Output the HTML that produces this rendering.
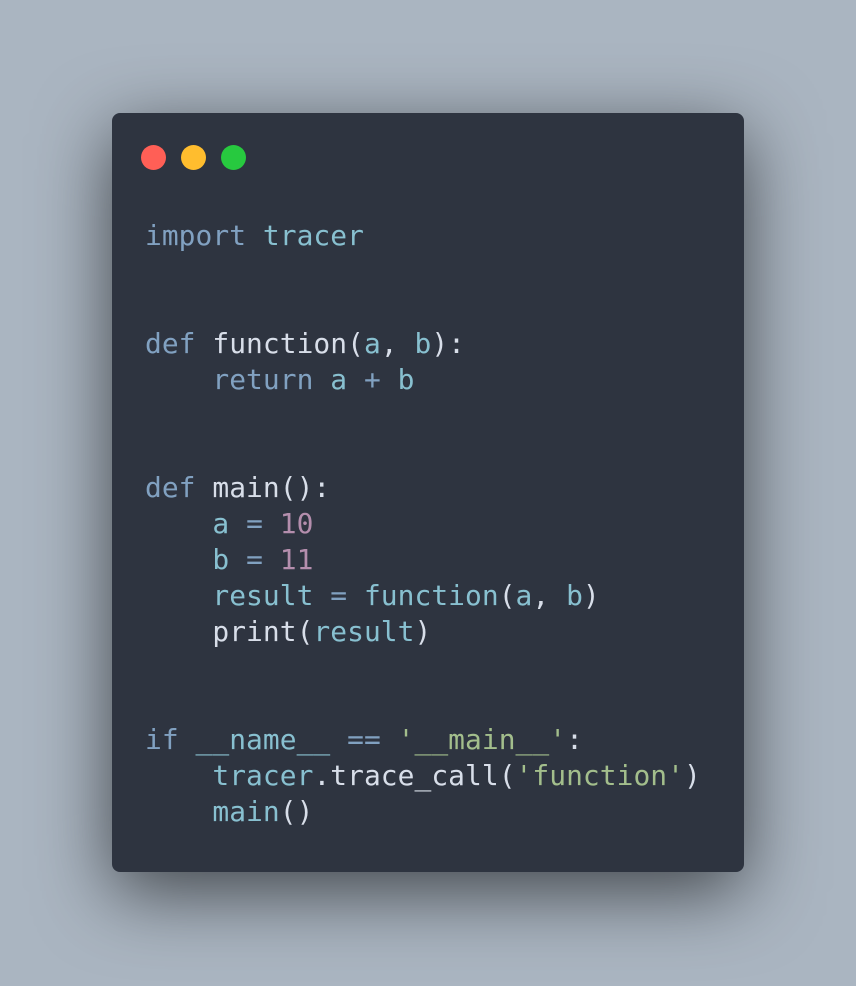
<!DOCTYPE html><html><head><style>
body{margin:0;width:856px;height:986px;background:#aab5c1;overflow:hidden;position:relative}
.card{position:absolute;left:112px;top:113px;width:632px;height:759px;background:#2e3440;border-radius:8px;box-shadow:0 20px 75px rgba(0,0,0,0.62)}
.d{position:absolute;top:145px;width:25px;height:25px;border-radius:50%}
pre{position:absolute;left:145px;top:218px;margin:0;font-family:"DejaVu Sans Mono","Liberation Mono",monospace;font-size:27.9px;letter-spacing:0.05px;line-height:36px;color:#d8dee9}
.k{color:#81a1c1}.n{color:#88c0d0}.s{color:#a3be8c}.m{color:#b48ead}
</style></head><body>
<div class="card"></div>
<div class="d" style="left:141px;background:#ff5f56"></div>
<div class="d" style="left:181px;background:#ffbd2e"></div>
<div class="d" style="left:221px;background:#27c93f"></div>
<pre><span class="k">import</span> <span class="n">tracer</span>


<span class="k">def</span> function(<span class="n">a</span>, <span class="n">b</span>):
    <span class="k">return</span> <span class="n">a</span> <span class="k">+</span> <span class="n">b</span>


<span class="k">def</span> main():
    <span class="n">a</span> <span class="k">=</span> <span class="m">10</span>
    <span class="n">b</span> <span class="k">=</span> <span class="m">11</span>
    <span class="n">result</span> <span class="k">=</span> <span class="n">function</span>(<span class="n">a</span>, <span class="n">b</span>)
    print(<span class="n">result</span>)


<span class="k">if</span> <span class="n">__name__</span> <span class="k">==</span> <span class="s">'__main__'</span>:
    <span class="n">tracer</span>.trace_call(<span class="s">'function'</span>)
    <span class="n">main</span>()</pre>
</body></html>
